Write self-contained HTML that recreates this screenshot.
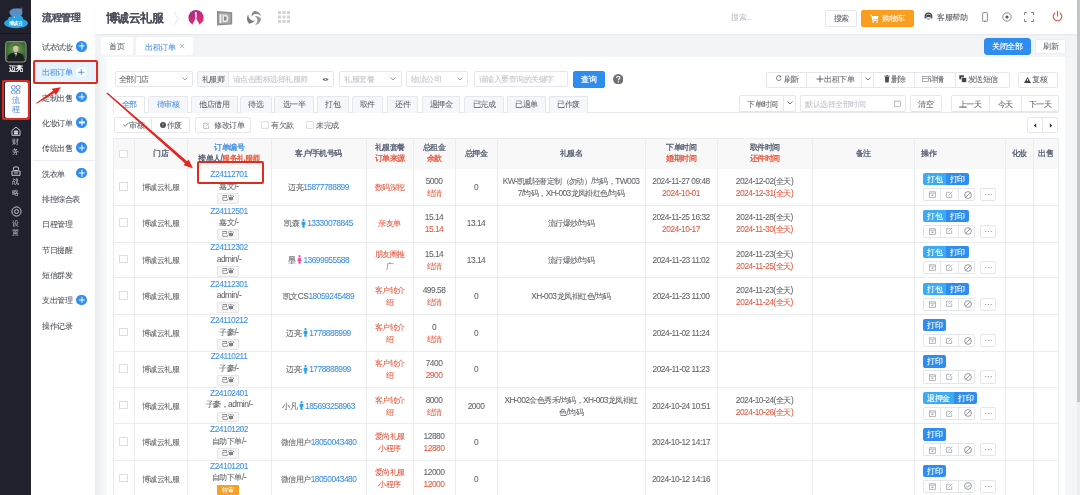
<!DOCTYPE html>
<html><head><meta charset="utf-8">
<style>
*{box-sizing:border-box;margin:0;padding:0}
html,body{width:1080px;height:495px;overflow:hidden}
body{position:relative;background:rgba(245,246,248,.99);font-family:"Liberation Sans",sans-serif;color:#606266;font-size:8.4px;line-height:1;font-weight:500;letter-spacing:-.5px}
.a{position:absolute}
.t{position:absolute;white-space:nowrap;line-height:1}
#nav{left:0;top:0;width:31px;height:495px;background:rgba(29,30,41,.99)}
#side{left:31px;top:0;width:64px;height:495px;background:rgba(255,255,255,.99)}
#hdr{left:95px;top:0;width:982px;height:34px;background:rgba(255,255,255,.99);box-shadow:0 1px 2px rgba(0,0,0,.06);z-index:1}
#tabs{left:95px;top:34px;width:982px;height:23px;background:rgba(243,244,246,.99)}
#card{left:107px;top:57px;width:958px;height:440px;background:rgba(255,255,255,.99)}
#sb{left:1077px;top:0;width:3px;height:402px;background:rgba(196,197,201,.99)}
.btn{position:absolute;border:1px solid #dcdfe6;border-radius:2px;background:rgba(255,255,255,.99);display:flex;align-items:center;justify-content:center;white-space:nowrap;color:#606266;font-size:8.4px}
.si{position:absolute;left:11.2px;font-size:8.4px;color:#4e5159;white-space:nowrap}
.plus{position:absolute;left:45.3px;width:10.7px;height:10.7px;border-radius:50%;background:rgba(45,140,240,.99)}
.plus:before,.plus:after{content:"";position:absolute;background:rgba(255,255,255,.99);left:50%;top:50%;transform:translate(-50%,-50%)}
.plus:before{width:6.4px;height:1.1px}.plus:after{width:1.1px;height:6.4px}
.nt{position:absolute;left:0;width:31px;text-align:center;color:#b9bcc4;font-size:7px;white-space:nowrap}
.red{color:#e6553a}.blue{color:#3a8ee6}
#root{position:absolute;left:0;top:0;width:1080px;height:495px;overflow:hidden;will-change:transform;-webkit-text-stroke:.05px}
</style></head><body><div id="root">
<!-- NAV -->
<div id="nav" class="a">
  <svg class="a" style="left:0;top:0" width="31" height="32" viewBox="0 0 31 32">
    <path d="M9.5 13 Q9 10.5 11.5 9.8 Q12.5 8 15.5 8.6 Q18.5 7.6 20.5 8.8 L21.8 8 L22.2 10 Q23 13 21.5 15.5 Q18 18 13 17 Q10 15.5 9.5 13Z" fill="#5b8ec4"/>
    <circle cx="21.6" cy="8.4" r=".9" fill="#c0392b"/>
    <circle cx="14" cy="17.6" r="1" fill="#e8f0f8"/>
    <ellipse cx="16" cy="23.3" rx="11.8" ry="4.9" fill="#2aa5e6"/>
    <circle cx="11.5" cy="20" r="3.6" fill="#2aa5e6"/>
    <circle cx="19" cy="19.4" r="4.2" fill="#2aa5e6"/>
    <text x="15.6" y="25" font-size="4.8" fill="#fff" text-anchor="middle" font-family="Liberation Sans" font-weight="bold" style="-webkit-text-stroke:0">博诚云</text>
  </svg>
  <div class="a" style="left:0;top:33px;width:31px;height:1px;background:rgba(22,22,30,.99)"></div>
  <svg class="a" style="left:5px;top:41px" width="21.5" height="21.5" viewBox="0 0 21.5 21.5">
    <defs><clipPath id="av"><rect x="0" y="0" width="21.5" height="21.5" rx="3"/></clipPath>
    <radialGradient id="gg" cx=".5" cy=".4" r=".7"><stop offset="0" stop-color="#7aa35a"/><stop offset=".6" stop-color="#3f6e34"/><stop offset="1" stop-color="#274722"/></radialGradient></defs>
    <g clip-path="url(#av)">
      <rect width="21.5" height="21.5" fill="url(#gg)"/>
      <ellipse cx="10.8" cy="7.6" rx="2.7" ry="3.4" fill="#d8c0a8"/>
      <path d="M8 5.6 Q10.8 2.8 13.6 5.6 L13.4 4.4 Q10.8 2.6 8.2 4.4Z" fill="#3a3226"/>
      <path d="M2 21.5 L3 14.5 Q5 12 9 11.5 L10.8 13 L12.6 11.5 Q16.5 12 18.5 14.5 L19.5 21.5Z" fill="#1c1f24"/>
      <path d="M9.3 11.6 L10.8 16 L12.3 11.6 L10.8 12.6Z" fill="#e8e8e8"/>
      <path d="M10.5 13 L11.1 13 L11.3 17 L10.8 18 L10.3 17Z" fill="#2a2a30"/>
    </g>
    <rect x=".5" y=".5" width="20.5" height="20.5" rx="3" fill="none" stroke="#8d8f86" stroke-width="1"/>
  </svg>
  <div class="nt" style="top:65px;color:#fff;font-size:7px;-webkit-text-stroke:.3px">迈亮</div>
  <div class="a" style="left:5px;top:82px;width:23px;height:36px;background:rgba(255,255,255,.99);border-radius:2px"></div>
  <svg class="a" style="left:11px;top:84.8px" width="9.5" height="9.5" viewBox="0 0 9.5 9.5">
    <g fill="none" stroke="#5b8bd8" stroke-width=".9"><circle cx="2.4" cy="2.4" r="1.95"/><circle cx="7.1" cy="2.4" r="1.95"/><circle cx="2.4" cy="7.1" r="1.95"/><circle cx="7.1" cy="7.1" r="1.95"/></g>
  </svg>
  <div class="nt" style="top:96.2px;color:#6393dd;font-size:8.4px">流</div>
  <div class="nt" style="top:104.6px;color:#6393dd;font-size:8.4px">程</div>
  <svg class="a" style="left:11px;top:126px" width="10" height="10" viewBox="0 0 10 10">
    <g fill="none" stroke="#c8cad0" stroke-width="1"><path d="M1 4.5 L5 1 L9 4.5 V9.3 H1 Z"/><rect x="3.5" y="5" width="3" height="3" fill="#c8cad0"/></g>
  </svg>
  <div class="nt" style="top:138px">财</div>
  <div class="nt" style="top:148px">务</div>
  <svg class="a" style="left:11px;top:166px" width="10" height="10" viewBox="0 0 10 10">
    <g fill="none" stroke="#c8cad0" stroke-width="1"><rect x="2.5" y="1" width="5" height="3.5" rx="1"/><path d="M1 5 H9 V9.3 H1 Z M3 7 H7"/></g>
  </svg>
  <div class="nt" style="top:178px">战</div>
  <div class="nt" style="top:188.5px">略</div>
  <svg class="a" style="left:10.5px;top:206px" width="11" height="11" viewBox="0 0 11 11">
    <g fill="none" stroke="#c8cad0" stroke-width="1"><circle cx="5.5" cy="5.5" r="4.6"/><circle cx="5.5" cy="5.5" r="2"/></g>
  </svg>
  <div class="nt" style="top:220px">设</div>
  <div class="nt" style="top:229px">置</div>
</div>
<!-- SIDE -->
<div id="side" class="a">
  <div class="t" style="left:11.2px;top:12.8px;font-size:9.5px;font-weight:bold;color:#50535e">流程管理</div>
  <div class="si" style="top:42.9px">试衣试妆</div>
  <div class="plus" style="top:41.0px"></div>
  <div class="a" style="left:2px;top:61px;width:63px;height:22px;background:rgba(230,243,253,.99)"></div>
  <div class="si" style="top:68.2px;color:#4a90e2">出租订单</div>
  <div class="a" style="left:45.3px;top:66.6px;width:10.7px;height:10.7px;border-radius:50%;background:rgba(255,255,255,.99)"></div>
  <svg class="a" style="left:47.4px;top:68.7px" width="6.5" height="6.5" viewBox="0 0 6.5 6.5"><path d="M3.25 0 V6.5 M0 3.25 H6.5" stroke="#4a90e2" stroke-width=".9"/></svg>
  <div class="si" style="top:93.6px">定制出售</div>
  <div class="plus" style="top:91.7px"></div>
  <div class="si" style="top:119.0px">化妆订单</div>
  <div class="plus" style="top:117.1px"></div>
  <div class="si" style="top:144.3px">传统出售</div>
  <div class="plus" style="top:142.4px"></div>
  <div class="a" style="left:2px;top:160px;width:62px;height:1px;background:rgba(235,238,245,.99)"></div>
  <div class="si" style="top:169.6px">洗衣单</div>
  <div class="plus" style="top:167.8px"></div>
  <div class="si" style="top:195.0px">排控综合表</div>
  <div class="si" style="top:220.4px">日程管理</div>
  <div class="si" style="top:245.7px">节日提醒</div>
  <div class="si" style="top:271.1px">短信群发</div>
  <div class="si" style="top:296.4px">支出管理</div>
  <div class="plus" style="top:294.5px"></div>
  <div class="si" style="top:321.8px">操作记录</div>
</div>
<!-- HEADER -->
<div id="hdr" class="a">
  <div class="t" style="left:10.5px;top:11.6px;font-size:11.7px;font-weight:bold;color:#4a4e5a">博诚云礼服</div>
  <svg class="a" style="left:78px;top:11px" width="6" height="15" viewBox="0 0 6 15"><path d="M1 1 L5 7.5 L1 14" fill="none" stroke="#e3e5ea" stroke-width="1"/></svg>
  <svg class="a" style="left:92.8px;top:10.1px" width="16" height="16" viewBox="0 0 16 16">
    <defs><linearGradient id="pg" x1="0" y1="0" x2=".6" y2="1"><stop offset="0" stop-color="#9c2a92"/><stop offset="1" stop-color="#ea2a68"/></linearGradient><clipPath id="pc"><circle cx="8" cy="7.7" r="7.6"/></clipPath></defs>
    <circle cx="8" cy="7.7" r="7.6" fill="url(#pg)"/>
    <g clip-path="url(#pc)" fill="#fff">
      <circle cx="7.8" cy="3" r="1.1"/>
      <path d="M7.2 4 L8.5 4 L8.8 6.5 L8.2 8 L9 10 L12.5 16 L3.5 16 L6.8 10 L7.4 8 L7 6.5Z"/>
    </g>
  </svg>
  <svg class="a" style="left:121.8px;top:10.5px" width="16" height="15" viewBox="0 0 16 15">
    <path d="M0 0 L15.2 1.2 V13.5 L0 14.6Z" fill="#8d8d8d"/>
    <path d="M1.6 1.8 L13.6 2.6 V12.3 L1.6 13Z" fill="#a9a9a9"/>
    <rect x="2.6" y="3.2" width="1.8" height="8.8" fill="#f2f2f2"/>
    <path d="M5.5 3.6 H8.5 Q11.3 3.6 11.3 7.5 Q11.3 11.3 8.5 11.3 H5.5Z" fill="#e6e6e6"/>
    <path d="M7 5.4 H8.3 Q9.6 5.4 9.6 7.5 Q9.6 9.5 8.3 9.5 H7Z" fill="#8a8a8a"/>
  </svg>
  <svg class="a" style="left:150.5px;top:10.1px" width="16" height="16" viewBox="0 0 16 16">
    <g fill="#8c8c8c">
      <path d="M8 1 C11.5 0.8 14.6 3 15 6.2 C13.5 4.2 11 3.6 8.6 4.3 C7.2 4.7 6.2 5.8 5.8 7 C5.3 4.6 6 2.4 8 1Z"/>
      <path d="M15 8.6 C14.8 12.4 12.2 14.8 9 15 C10.8 13.6 11.6 11.3 11.1 9 C10.8 7.6 9.8 6.6 8.6 6.2 C11 5.6 13.3 6.5 15 8.6Z" fill="#9a9a9a"/>
      <path d="M2.8 13.4 C0.6 10.8 0.4 7 2.2 4.4 C2.2 6.9 3.5 9 5.6 10.2 C6.9 10.9 8.3 10.9 9.4 10.3 C7.8 12.3 5.3 13.6 2.8 13.4Z" fill="#7a7a7a"/>
    </g>
  </svg>
  <svg class="a" style="left:183px;top:11px" width="12" height="12" viewBox="0 0 12 12">
    <g fill="#d0d2d6"><rect x="0" y="0" width="3" height="3"/><rect x="4.5" y="0" width="3" height="3"/><rect x="9" y="0" width="3" height="3"/><rect x="0" y="4.5" width="3" height="3"/><rect x="4.5" y="4.5" width="3" height="3"/><rect x="9" y="4.5" width="3" height="3"/><rect x="0" y="9" width="3" height="3"/><rect x="4.5" y="9" width="3" height="3"/><rect x="9" y="9" width="3" height="3"/></g>
  </svg>
  <div class="t" style="left:636px;top:13px;color:#c0c4cc;font-size:8.4px">搜索...</div>
  <div class="btn" style="left:730px;top:9.5px;width:32px;height:17px;border-color:#e4e7ed">搜索</div>
  <div class="btn" style="left:766px;top:9.5px;width:52.5px;height:17px;background:rgba(250,157,28,.99);border-color:#fa9d1c;color:#fff;justify-content:flex-start;padding-left:8px">
    <svg width="9" height="9" viewBox="0 0 9 9" style="margin-right:3px"><path d="M0 .8 H1.7 L2.1 2 H8.6 L7.6 5.4 H2.9 L3.1 6.2 H8 V7 H2.4 L1.2 1.6 H0Z" fill="#fff"/><circle cx="3.2" cy="8" r=".85" fill="#fff"/><circle cx="7" cy="8" r=".85" fill="#fff"/></svg>购物车</div>
  <svg class="a" style="left:829px;top:12px" width="9" height="10" viewBox="0 0 9 10"><path d="M4.5 .4 C1.8 .4 .6 2.2 .6 4.4 V6.4 H1.8 V4.6 C1.8 3 2.9 1.8 4.5 1.8 C6.1 1.8 7.2 3 7.2 4.6 V6.4 H8.4 V4.4 C8.4 2.2 7.2 .4 4.5 .4Z" fill="#3b3e45"/><path d="M2.2 3.2 Q4.5 1.6 6.8 3.2 Q7 6.8 4.5 8 Q2 6.8 2.2 3.2Z" fill="#3b3e45"/><path d="M2.9 5.2 Q4.5 4.4 6.1 5.2 Q5.9 7.3 4.5 7.6 Q3.1 7.3 2.9 5.2Z" fill="#e9eaec"/></svg>
  <div class="t" style="left:842px;top:13px;font-size:8.4px;color:#4f535c">客服帮助</div>
  <svg class="a" style="left:887px;top:12px" width="6" height="10" viewBox="0 0 6 10"><rect x=".6" y=".6" width="4.8" height="8.8" rx=".8" fill="none" stroke="#6b6e75" stroke-width=".8"/><rect x="2.3" y="8" width="1.4" height=".5" fill="#6b6e75"/></svg>
  <svg class="a" style="left:907px;top:12px" width="10" height="10" viewBox="0 0 10 10"><circle cx="5" cy="5" r="4.2" fill="none" stroke="#6b6e75" stroke-width=".8"/><circle cx="5" cy="5" r="1.6" fill="#55585f"/></svg>
  <svg class="a" style="left:929px;top:12px" width="10" height="10" viewBox="0 0 10 10"><g fill="none" stroke="#6b6e75" stroke-width=".8"><path d="M.5 3 V.5 H3 M7 .5 H9.5 V3 M9.5 7 V9.5 H7 M3 9.5 H.5 V7"/></g></svg>
  <svg class="a" style="left:957px;top:10px" width="11" height="12" viewBox="0 0 11 12"><g fill="none" stroke="#e25a3e" stroke-width="1.1" stroke-linecap="round"><path d="M3 3 A4.3 4.3 0 1 0 8 3"/><path d="M5.5 1 V6"/></g></svg>
</div>
<!-- TABS BAR -->
<div id="tabs" class="a">
  <div class="a" style="left:5.8px;top:3.3px;width:32px;height:17.5px;background:rgba(255,255,255,.99);border-radius:2px"></div>
  <div class="a" style="left:5.8px;top:3.3px;width:32px;height:17.5px;display:flex;align-items:center;justify-content:center;color:#666a73">首页</div>
  <div class="a" style="left:40.8px;top:3.3px;width:57px;height:17.5px;background:rgba(255,255,255,.99);border-radius:2px"></div>
  <div class="t" style="left:50px;top:8.6px;color:#4a90e2">出租订单</div>
  <svg class="a" style="left:84px;top:9px" width="6" height="6" viewBox="0 0 6 6"><path d="M.8 .8 L5.2 5.2 M5.2 .8 L.8 5.2" stroke="#a0a4ab" stroke-width=".8"/></svg>
  <div class="btn" style="left:889.3px;top:3.9px;width:46.4px;height:16.7px;background:rgba(45,140,240,.99);border-color:#2d8cf0;color:#fff;border-radius:3px;padding-bottom:1px;-webkit-text-stroke:.15px">关闭全部</div>
  <div class="btn" style="left:940.4px;top:4.9px;width:30.8px;height:15.6px;border-color:#ebedf0;padding-bottom:.6px">刷新</div>
</div>
<!-- CARD -->
<div class="a" style="left:95px;top:57px;width:12px;height:438px;background:linear-gradient(90deg,#e9ebee,#f5f6f8 60%,#f7f8fa)"></div>
<div id="card" class="a"></div>
<div class="a" style="left:1077px;top:402px;width:3px;height:93px;background:rgba(236,238,241,.99)"></div><div id="sb" class="a"></div>
<!-- Row A -->
<div class="btn" style="left:114.5px;top:71.4px;width:78px;height:16px;justify-content:flex-start;padding-left:3px;border-color:#e4e7ed">全部门店</div>
<svg class="a" style="left:182px;top:77px" width="6" height="4" viewBox="0 0 6 4"><path d="M.5 .5 L3 3 L5.5 .5" fill="none" stroke="#909399" stroke-width=".9"/></svg>
<div class="btn" style="left:197.3px;top:71.4px;width:137px;height:16px;justify-content:flex-start;border-color:#e4e7ed;overflow:hidden">
  <div style="width:30.5px;height:100%;background:rgba(245,247,250,.99);border-right:1px solid #e4e7ed;display:flex;align-items:center;justify-content:center;color:#606266">礼服师</div>
  <span style="margin-left:4px;color:#c0c4cc">请点击图标选择礼服师</span>
</div>
<svg class="a" style="left:322.3px;top:76.8px" width="7" height="5" viewBox="0 0 7 5"><path d="M.3 2.6 Q3.5 -.6 6.7 2.6 Q3.5 5.4 .3 2.6Z" fill="#5a5d63"/><circle cx="3.5" cy="2.5" r=".9" fill="#f0f0f0"/></svg>
<div class="btn" style="left:339px;top:71.4px;width:62.5px;height:16px;justify-content:flex-start;padding-left:4px;border-color:#e4e7ed;color:#c0c4cc">礼服套餐</div>
<svg class="a" style="left:390px;top:77px" width="6" height="4" viewBox="0 0 6 4"><path d="M.5 .5 L3 3 L5.5 .5" fill="none" stroke="#909399" stroke-width=".9"/></svg>
<div class="btn" style="left:406.4px;top:71.4px;width:62px;height:16px;justify-content:flex-start;padding-left:4px;border-color:#e4e7ed;color:#c0c4cc">物流公司</div>
<svg class="a" style="left:457px;top:77px" width="6" height="4" viewBox="0 0 6 4"><path d="M.5 .5 L3 3 L5.5 .5" fill="none" stroke="#909399" stroke-width=".9"/></svg>
<div class="btn" style="left:473.6px;top:71.4px;width:94.7px;height:16px;justify-content:flex-start;padding-left:4px;border-color:#e4e7ed;color:#c0c4cc">请输入要查询的关键字</div>
<div class="btn" style="left:572.5px;top:71px;width:32px;height:16.7px;background:rgba(45,140,240,.99);border-color:#2d8cf0;color:#fff;border-radius:2px;-webkit-text-stroke:.2px;padding-bottom:.6px">查询</div>
<svg class="a" style="left:612.6px;top:73.5px" width="10.5" height="10.5" viewBox="0 0 10.5 10.5"><circle cx="5.25" cy="5.25" r="5.2" fill="#6f7177"/><path d="M3.6 4 Q3.6 2.3 5.25 2.3 Q6.9 2.3 6.9 3.8 Q6.9 4.8 5.7 5.3 L5.4 6.4" fill="none" stroke="#fff" stroke-width="1.1"/><circle cx="5.4" cy="7.9" r=".7" fill="#fff"/></svg>
<!-- right group A -->
<div class="a" style="left:765.6px;top:71.5px;width:244.4px;height:16.1px;border:1px solid #e4e7ed;border-radius:2px;background:rgba(255,255,255,.99)"></div>
<div class="a" style="left:805.8px;top:71.5px;width:1px;height:16px;background:rgba(228,231,237,.99)"></div>
<div class="a" style="left:861.2px;top:71.5px;width:1px;height:16px;background:rgba(228,231,237,.99)"></div>
<div class="a" style="left:873.4px;top:71.5px;width:1px;height:16px;background:rgba(228,231,237,.99)"></div>
<div class="a" style="left:913.8px;top:71.5px;width:1px;height:16px;background:rgba(228,231,237,.99)"></div>
<div class="a" style="left:954.5px;top:71.5px;width:1px;height:16px;background:rgba(228,231,237,.99)"></div>
<svg class="a" style="left:776px;top:75.2px" width="6" height="6" viewBox="0 0 6 6"><path d="M5 2 A2.4 2.4 0 1 0 5.2 3.6" fill="none" stroke="#606266" stroke-width=".9"/><path d="M4 .6 L5.4 2.2 L3.6 2.6Z" fill="#606266"/></svg>
<div class="t" style="left:783.5px;top:74.5px">刷新</div>
<svg class="a" style="left:815.5px;top:74.5px" width="8" height="8" viewBox="0 0 8 8"><path d="M4 .5 V7.5 M.5 4 H7.5" stroke="#606266" stroke-width="1"/></svg>
<div class="t" style="left:824px;top:74.5px">出租下单</div>
<svg class="a" style="left:864.5px;top:77px" width="6" height="4" viewBox="0 0 6 4"><path d="M.5 .5 L3 3 L5.5 .5" fill="none" stroke="#606266" stroke-width=".9"/></svg>
<svg class="a" style="left:883.5px;top:75px" width="6" height="8" viewBox="0 0 6 8"><path d="M.3 1.2 H5.7 M2 .3 H4" stroke="#4a4d55" stroke-width=".9"/><path d="M.9 2 H5.1 L4.7 7.6 H1.3Z" fill="#4a4d55"/></svg>
<div class="t" style="left:890.5px;top:74.5px">删除</div>
<svg class="a" style="left:921.5px;top:75.5px" width="7" height="6" viewBox="0 0 7 6"><rect x=".5" y=".5" width="6" height="5" fill="none" stroke="#9a9da3" stroke-width=".8"/><path d="M.5 2.5 H6.5" stroke="#9a9da3" stroke-width=".8"/></svg>
<div class="t" style="left:928.5px;top:74.5px">详情</div>
<svg class="a" style="left:959px;top:74.8px" width="8" height="8" viewBox="0 0 8 8"><rect x=".3" y=".3" width="4.6" height="4" fill="#3f4249"/><rect x="2.6" y="2.7" width="5" height="4.6" fill="#3f4249" stroke="#fff" stroke-width=".6"/></svg>
<div class="t" style="left:967.5px;top:74.5px">发送短信</div>
<div class="btn" style="left:1017.7px;top:71.5px;width:40px;height:16.1px;border-color:#e4e7ed;justify-content:flex-start;padding-left:5.5px"><svg width="7" height="6" viewBox="0 0 7 6" style="margin-right:1px"><path d="M3.5 0 L7 6 H0Z" fill="#3f4249"/><path d="M3.5 2 V4" stroke="#fff" stroke-width=".8"/></svg>复核</div>
<!-- Row B tabs -->
<div class="a" style="left:113.4px;top:112.3px;width:945px;height:1px;background:rgba(228,231,237,.99)"></div>
<div class="a" style="left:113.4px;top:95.5px;width:32.0px;height:17.5px;background:rgba(255,255,255,.99);border:1px solid #e4e7ed;border-bottom:none;border-radius:2px 2px 0 0"></div>
<div class="a" style="left:113.4px;top:95.5px;width:32.0px;height:17px;display:flex;align-items:center;justify-content:center;color:#4a90e2;white-space:nowrap">全部</div>
<div class="a" style="left:148px;top:95.5px;width:39.7px;height:17px;background:rgba(245,247,250,.99);border:1px solid #e4e7ed;border-bottom:none;border-radius:2px 2px 0 0;display:flex;align-items:center;justify-content:center;color:#4a90e2;white-space:nowrap">待审核</div>
<div class="a" style="left:190.5px;top:95.5px;width:47.2px;height:17px;background:rgba(245,247,250,.99);border:1px solid #e4e7ed;border-bottom:none;border-radius:2px 2px 0 0;display:flex;align-items:center;justify-content:center;color:#606266;white-space:nowrap">他店借用</div>
<div class="a" style="left:240px;top:95.5px;width:31.7px;height:17px;background:rgba(245,247,250,.99);border:1px solid #e4e7ed;border-bottom:none;border-radius:2px 2px 0 0;display:flex;align-items:center;justify-content:center;color:#606266;white-space:nowrap">待选</div>
<div class="a" style="left:274.3px;top:95.5px;width:39.7px;height:17px;background:rgba(245,247,250,.99);border:1px solid #e4e7ed;border-bottom:none;border-radius:2px 2px 0 0;display:flex;align-items:center;justify-content:center;color:#606266;white-space:nowrap">选一半</div>
<div class="a" style="left:316.5px;top:95.5px;width:32.5px;height:17px;background:rgba(245,247,250,.99);border:1px solid #e4e7ed;border-bottom:none;border-radius:2px 2px 0 0;display:flex;align-items:center;justify-content:center;color:#606266;white-space:nowrap">打包</div>
<div class="a" style="left:351.7px;top:95.5px;width:31.6px;height:17px;background:rgba(245,247,250,.99);border:1px solid #e4e7ed;border-bottom:none;border-radius:2px 2px 0 0;display:flex;align-items:center;justify-content:center;color:#606266;white-space:nowrap">取件</div>
<div class="a" style="left:387px;top:95.5px;width:31.0px;height:17px;background:rgba(245,247,250,.99);border:1px solid #e4e7ed;border-bottom:none;border-radius:2px 2px 0 0;display:flex;align-items:center;justify-content:center;color:#606266;white-space:nowrap">还件</div>
<div class="a" style="left:421.7px;top:95.5px;width:38.8px;height:17px;background:rgba(245,247,250,.99);border:1px solid #e4e7ed;border-bottom:none;border-radius:2px 2px 0 0;display:flex;align-items:center;justify-content:center;color:#606266;white-space:nowrap">退押金</div>
<div class="a" style="left:464px;top:95.5px;width:39.6px;height:17px;background:rgba(245,247,250,.99);border:1px solid #e4e7ed;border-bottom:none;border-radius:2px 2px 0 0;display:flex;align-items:center;justify-content:center;color:#606266;white-space:nowrap">已完成</div>
<div class="a" style="left:507px;top:95.5px;width:38.5px;height:17px;background:rgba(245,247,250,.99);border:1px solid #e4e7ed;border-bottom:none;border-radius:2px 2px 0 0;display:flex;align-items:center;justify-content:center;color:#606266;white-space:nowrap">已退单</div>
<div class="a" style="left:549px;top:95.5px;width:39.3px;height:17px;background:rgba(245,247,250,.99);border:1px solid #e4e7ed;border-bottom:none;border-radius:2px 2px 0 0;display:flex;align-items:center;justify-content:center;color:#606266;white-space:nowrap">已作废</div>
<!-- Row B right -->
<div class="a" style="left:738.6px;top:95.3px;width:57.7px;height:17px;border:1px solid #e4e7ed;border-radius:2px;background:rgba(255,255,255,.99)"></div>
<div class="a" style="left:783.3px;top:95.3px;width:1px;height:16.7px;background:rgba(228,231,237,.99)"></div>
<div class="t" style="left:747px;top:99.9px">下单时间</div>
<svg class="a" style="left:787px;top:101.3px" width="6" height="4" viewBox="0 0 6 4"><path d="M.5 .5 L3 3 L5.5 .5" fill="none" stroke="#606266" stroke-width=".9"/></svg>
<div class="a" style="left:800.4px;top:95.3px;width:105.2px;height:17px;border:1px solid #e4e7ed;border-radius:2px;background:rgba(255,255,255,.99)"></div>
<div class="t" style="left:805px;top:99.9px;color:#c0c4cc">默认选择全部时间</div>
<svg class="a" style="left:894px;top:99.6px" width="7" height="7" viewBox="0 0 7 7"><g fill="none" stroke="#a8abb2" stroke-width=".7"><rect x=".4" y="1.2" width="6.2" height="5.4"/><path d="M2 .3 V1.6 M5 .3 V1.6"/></g></svg>
<div class="a" style="left:910.4px;top:95.3px;width:31.2px;height:17px;border:1px solid #e4e7ed;border-radius:2px;background:rgba(255,255,255,.99);display:flex;align-items:center;justify-content:center">清空</div>
<div class="a" style="left:950.7px;top:95.3px;width:108.2px;height:17px;border:1px solid #e4e7ed;border-radius:2px;background:rgba(255,255,255,.99)"></div>
<div class="a" style="left:989.4px;top:95.3px;width:1px;height:17px;background:rgba(228,231,237,.99)"></div>
<div class="a" style="left:1020.7px;top:95.3px;width:1px;height:17px;background:rgba(228,231,237,.99)"></div>
<div class="a" style="left:950.7px;top:95.3px;width:38.7px;height:17px;display:flex;align-items:center;justify-content:center">上一天</div>
<div class="a" style="left:989.4px;top:95.3px;width:31.3px;height:17px;display:flex;align-items:center;justify-content:center">今天</div>
<div class="a" style="left:1020.7px;top:95.3px;width:38.2px;height:17px;display:flex;align-items:center;justify-content:center">下一天</div>
<!-- Row C -->
<div class="a" style="left:113.6px;top:116.7px;width:76.6px;height:16.2px;border:1px solid #e4e7ed;border-radius:2px;background:rgba(255,255,255,.99)"></div>
<div class="a" style="left:150.7px;top:116.7px;width:1px;height:16.2px;background:rgba(228,231,237,.99)"></div>
<svg class="a" style="left:122.5px;top:122px" width="6" height="5" viewBox="0 0 6 5"><path d="M.4 2.6 L2.2 4.3 L5.6 .6" fill="none" stroke="#555" stroke-width=".8"/></svg>
<div class="t" style="left:129px;top:120.8px">审核</div>
<svg class="a" style="left:160px;top:121.5px" width="6" height="6" viewBox="0 0 6 6"><circle cx="3" cy="3" r="2.9" fill="#3f4249"/><path d="M3 1.3 V3.4" stroke="#fff" stroke-width=".8"/><circle cx="3" cy="4.5" r=".45" fill="#fff"/></svg>
<div class="t" style="left:166.9px;top:120.8px">作废</div>
<div class="btn" style="left:194.7px;top:116.7px;width:56.6px;height:16.2px;border-color:#e4e7ed"></div>
<svg class="a" style="left:202.5px;top:121.5px" width="7" height="7" viewBox="0 0 7 7"><g fill="none" stroke="#a0a3aa" stroke-width=".7"><path d="M4.5 1.3 H.6 V6.4 H5.7 V3.2"/><path d="M2.6 4.4 L6.4 .6"/></g></svg>
<div class="t" style="left:214.2px;top:120.8px">修改订单</div>
<div class="a" style="left:260.9px;top:120.7px;width:7.8px;height:8.2px;border:1px solid #dcdfe6;border-radius:1px;background:rgba(255,255,255,.99)"></div>
<div class="t" style="left:271.3px;top:120.8px">有欠款</div>
<div class="a" style="left:306.4px;top:120.7px;width:7.8px;height:8.2px;border:1px solid #dcdfe6;border-radius:1px;background:rgba(255,255,255,.99)"></div>
<div class="t" style="left:316.4px;top:120.8px">未完成</div>
<div class="a" style="left:1026.5px;top:116.7px;width:31.6px;height:16.1px;border:1px solid #e4e7ed;border-radius:2px;background:rgba(255,255,255,.99)"></div>
<div class="a" style="left:1042.4px;top:116.7px;width:1px;height:16.1px;background:rgba(228,231,237,.99)"></div>
<svg class="a" style="left:1032.5px;top:122.5px" width="4" height="5" viewBox="0 0 4 5"><path d="M3.2 .3 L.8 2.5 L3.2 4.7Z" fill="#333"/></svg>
<svg class="a" style="left:1048.5px;top:122.5px" width="4" height="5" viewBox="0 0 4 5"><path d="M.8 .3 L3.2 2.5 L.8 4.7Z" fill="#333"/></svg>
<div class="a" style="left:113px;top:138px;width:945.0px;height:30.8px;background:rgba(248,248,249,.99)"></div>
<div class="a" style="left:113px;top:138px;width:946px;height:1px;background:rgba(235,236,239,.99)"></div>
<div class="a" style="left:113px;top:205px;width:946px;height:1px;background:rgba(235,236,239,.99)"></div>
<div class="a" style="left:113px;top:242px;width:946px;height:1px;background:rgba(235,236,239,.99)"></div>
<div class="a" style="left:113px;top:277px;width:946px;height:1px;background:rgba(235,236,239,.99)"></div>
<div class="a" style="left:113px;top:314px;width:946px;height:1px;background:rgba(235,236,239,.99)"></div>
<div class="a" style="left:113px;top:351px;width:946px;height:1px;background:rgba(235,236,239,.99)"></div>
<div class="a" style="left:113px;top:387px;width:946px;height:1px;background:rgba(235,236,239,.99)"></div>
<div class="a" style="left:113px;top:423px;width:946px;height:1px;background:rgba(235,236,239,.99)"></div>
<div class="a" style="left:113px;top:460px;width:946px;height:1px;background:rgba(235,236,239,.99)"></div>
<div class="a" style="left:113px;top:138px;width:1px;height:357px;background:rgba(235,236,239,.99)"></div>
<div class="a" style="left:134px;top:138px;width:1px;height:357px;background:rgba(235,236,239,.99)"></div>
<div class="a" style="left:187px;top:138px;width:1px;height:357px;background:rgba(235,236,239,.99)"></div>
<div class="a" style="left:271px;top:138px;width:1px;height:357px;background:rgba(235,236,239,.99)"></div>
<div class="a" style="left:366px;top:138px;width:1px;height:357px;background:rgba(235,236,239,.99)"></div>
<div class="a" style="left:413px;top:138px;width:1px;height:357px;background:rgba(235,236,239,.99)"></div>
<div class="a" style="left:455px;top:138px;width:1px;height:357px;background:rgba(235,236,239,.99)"></div>
<div class="a" style="left:497px;top:138px;width:1px;height:357px;background:rgba(235,236,239,.99)"></div>
<div class="a" style="left:645px;top:138px;width:1px;height:357px;background:rgba(235,236,239,.99)"></div>
<div class="a" style="left:717px;top:138px;width:1px;height:357px;background:rgba(235,236,239,.99)"></div>
<div class="a" style="left:812px;top:138px;width:1px;height:357px;background:rgba(235,236,239,.99)"></div>
<div class="a" style="left:914px;top:138px;width:1px;height:357px;background:rgba(235,236,239,.99)"></div>
<div class="a" style="left:1005px;top:138px;width:1px;height:357px;background:rgba(235,236,239,.99)"></div>
<div class="a" style="left:1033px;top:138px;width:1px;height:357px;background:rgba(235,236,239,.99)"></div>
<div class="a" style="left:1058px;top:138px;width:1px;height:357px;background:rgba(235,236,239,.99)"></div>
<div class="a" style="left:119.4px;top:149.5px;width:8.5px;height:8.5px;border:1px solid #dcdee2;border-radius:1px;background:rgba(255,255,255,.99)"></div>
<div class="a" style="left:134.0px;top:148.00px;width:53.0px;height:10px;line-height:10px;text-align:center;white-space:nowrap;color:#515a6e;-webkit-text-stroke:.28px;">门店</div>
<div class="a" style="left:187.0px;top:141.90px;width:84.0px;height:10px;line-height:10px;text-align:center;white-space:nowrap;color:#3a8ee6;-webkit-text-stroke:.28px;">订单编号</div>
<div class="a" style="left:187.0px;top:153.10px;width:84.0px;height:10px;line-height:10px;text-align:center;white-space:nowrap;-webkit-text-stroke:.28px;"><span style="color:#515a6e">接单人/</span><span style="color:#e6553a">服务礼服师</span></div>
<div class="a" style="left:271.0px;top:148.00px;width:95.0px;height:10px;line-height:10px;text-align:center;white-space:nowrap;color:#515a6e;-webkit-text-stroke:.28px;">客户/手机号码</div>
<div class="a" style="left:366.0px;top:141.90px;width:47.0px;height:10px;line-height:10px;text-align:center;white-space:nowrap;color:#515a6e;-webkit-text-stroke:.28px;">礼服套餐</div>
<div class="a" style="left:366.0px;top:153.40px;width:47.0px;height:10px;line-height:10px;text-align:center;white-space:nowrap;color:#e6553a;-webkit-text-stroke:.28px;">订单来源</div>
<div class="a" style="left:413.0px;top:141.90px;width:42.0px;height:10px;line-height:10px;text-align:center;white-space:nowrap;color:#515a6e;-webkit-text-stroke:.28px;">总租金</div>
<div class="a" style="left:413.0px;top:153.40px;width:42.0px;height:10px;line-height:10px;text-align:center;white-space:nowrap;color:#e6553a;-webkit-text-stroke:.28px;">余款</div>
<div class="a" style="left:455.0px;top:148.00px;width:42.0px;height:10px;line-height:10px;text-align:center;white-space:nowrap;color:#515a6e;-webkit-text-stroke:.28px;">总押金</div>
<div class="a" style="left:497.0px;top:148.00px;width:148.0px;height:10px;line-height:10px;text-align:center;white-space:nowrap;color:#515a6e;-webkit-text-stroke:.28px;">礼服名</div>
<div class="a" style="left:645.0px;top:141.90px;width:72.0px;height:10px;line-height:10px;text-align:center;white-space:nowrap;color:#515a6e;-webkit-text-stroke:.28px;">下单时间</div>
<div class="a" style="left:645.0px;top:153.40px;width:72.0px;height:10px;line-height:10px;text-align:center;white-space:nowrap;color:#e6553a;-webkit-text-stroke:.28px;">婚期时间</div>
<div class="a" style="left:717.0px;top:141.90px;width:95.0px;height:10px;line-height:10px;text-align:center;white-space:nowrap;color:#515a6e;-webkit-text-stroke:.28px;">取件时间</div>
<div class="a" style="left:717.0px;top:153.40px;width:95.0px;height:10px;line-height:10px;text-align:center;white-space:nowrap;color:#e6553a;-webkit-text-stroke:.28px;">还件时间</div>
<div class="a" style="left:812.0px;top:148.00px;width:102.0px;height:10px;line-height:10px;text-align:center;white-space:nowrap;color:#515a6e;-webkit-text-stroke:.28px;">备注</div>
<div class="a" style="left:921px;top:148.0px;height:10px;line-height:10px;color:#515a6e;-webkit-text-stroke:.28px;">操作</div>
<div class="a" style="left:1005.0px;top:148.00px;width:28.0px;height:10px;line-height:10px;text-align:center;white-space:nowrap;color:#515a6e;-webkit-text-stroke:.28px;">化妆</div>
<div class="a" style="left:1033.0px;top:148.00px;width:25.0px;height:10px;line-height:10px;text-align:center;white-space:nowrap;color:#515a6e;-webkit-text-stroke:.28px;">出售</div>
<div class="a" style="left:119px;top:182.0px;width:8.5px;height:8.5px;border:1px solid #dcdee2;border-radius:.5px;background:rgba(255,255,255,.99)"></div>
<div class="a" style="left:134.0px;top:182.00px;width:53.0px;height:10px;line-height:10px;text-align:center;white-space:nowrap;">博诚云礼服</div>
<div class="a" style="left:187.0px;top:169.20px;width:84.0px;height:10px;line-height:10px;text-align:center;white-space:nowrap;color:#3a8ee6;">Z24112701</div>
<div class="a" style="left:187.0px;top:180.70px;width:84.0px;height:10px;line-height:10px;text-align:center;white-space:nowrap;">嘉文/-</div>
<div class="a" style="left:217px;top:192.9px;width:22px;height:10.9px;background:rgba(246,246,247,.99);border:1px solid #e6e6e8;border-radius:1px;color:#555;font-size:6.4px;line-height:8.9px;text-align:center;letter-spacing:0">已审</div>
<div class="a" style="left:271.0px;top:182.00px;width:95.0px;height:10px;line-height:10px;text-align:center;white-space:nowrap;">迈亮<span style="color:#3a8ee6">15877788899</span></div>
<div class="a" style="left:366.0px;top:182.00px;width:47.0px;height:10px;line-height:10px;text-align:center;white-space:nowrap;color:#e6553a;">数码深挖</div>
<div class="a" style="left:413.0px;top:175.80px;width:42.0px;height:10px;line-height:10px;text-align:center;white-space:nowrap;">5000</div>
<div class="a" style="left:413.0px;top:187.80px;width:42.0px;height:10px;line-height:10px;text-align:center;white-space:nowrap;color:#e6553a;">结清</div>
<div class="a" style="left:455.0px;top:182.00px;width:42.0px;height:10px;line-height:10px;text-align:center;white-space:nowrap;">0</div>
<div class="a" style="left:497.0px;top:175.80px;width:148.0px;height:10px;line-height:10px;text-align:center;white-space:nowrap;letter-spacing:-.58px;">KW-凯威轻奢定制（勿动）/均码，TW003</div>
<div class="a" style="left:497.0px;top:187.80px;width:148.0px;height:10px;line-height:10px;text-align:center;white-space:nowrap;letter-spacing:-.58px;">7/均码，XH-003龙凤褂红色/均码</div>
<div class="a" style="left:645.0px;top:175.80px;width:72.0px;height:10px;line-height:10px;text-align:center;white-space:nowrap;">2024-11-27 09:48</div>
<div class="a" style="left:645.0px;top:187.80px;width:72.0px;height:10px;line-height:10px;text-align:center;white-space:nowrap;color:#e6553a;">2024-10-01</div>
<div class="a" style="left:717.0px;top:175.80px;width:95.0px;height:10px;line-height:10px;text-align:center;white-space:nowrap;">2024-12-02(全天)</div>
<div class="a" style="left:717.0px;top:187.80px;width:95.0px;height:10px;line-height:10px;text-align:center;white-space:nowrap;color:#e6553a;">2024-12-31(全天)</div>
<div class="a" style="left:923.2px;top:173.1px;width:22.7px;height:12.4px;background:rgba(58,170,242,.99);border-radius:2px 0 0 2px;color:#fff;line-height:12.4px;text-align:center;-webkit-text-stroke:.12px">打包</div>
<div class="a" style="left:945.9px;top:173.1px;width:23.2px;height:12.4px;background:rgba(45,140,240,.99);border-radius:0 2px 2px 0;color:#fff;line-height:12.4px;text-align:center;-webkit-text-stroke:.12px">打印</div>
<div class="a" style="left:923.2px;top:188.1px;width:52px;height:13.2px;border:1px solid #e4e6ea;border-radius:2px;background:rgba(255,255,255,.99)"></div>
<div class="a" style="left:940px;top:188.1px;width:1px;height:13.2px;background:rgba(228,230,234,.99)"></div>
<div class="a" style="left:958px;top:188.1px;width:1px;height:13.2px;background:rgba(228,230,234,.99)"></div>
<div class="a" style="left:980.3px;top:188.1px;width:15.4px;height:13.2px;border:1px solid #e4e6ea;border-radius:2px;background:rgba(255,255,255,.99)"></div>
<svg class="a" style="left:928.5px;top:191.3px" width="7" height="7" viewBox="0 0 7 7"><g fill="none" stroke="#9a9da4" stroke-width=".7"><rect x=".4" y=".8" width="6.2" height="5.8"/><path d="M.4 2.2 H6.6 M2.3 4.3 H4.7 M3.5 3.3 V5.3"/></g></svg>
<svg class="a" style="left:946px;top:190.9px" width="7" height="7" viewBox="0 0 7 7"><g fill="none" stroke="#9a9da4" stroke-width=".7"><path d="M4.5 1.3 H.6 V6.4 H5.7 V3.2"/><path d="M2.6 4.4 L6.4 .6"/></g></svg>
<svg class="a" style="left:963.5px;top:190.7px" width="8" height="8" viewBox="0 0 8 8"><g fill="none" stroke="#7d8087" stroke-width=".8"><circle cx="4" cy="4" r="3.4"/><path d="M1.6 6.4 L6.4 1.6"/></g></svg>
<svg class="a" style="left:984.5px;top:194.1px" width="7" height="1.4" viewBox="0 0 7 1.4"><g fill="#8a8d94"><circle cx=".7" cy=".7" r=".6"/><circle cx="3.5" cy=".7" r=".6"/><circle cx="6.3" cy=".7" r=".6"/></g></svg>
<div class="a" style="left:119px;top:218.4px;width:8.5px;height:8.5px;border:1px solid #dcdee2;border-radius:.5px;background:rgba(255,255,255,.99)"></div>
<div class="a" style="left:134.0px;top:218.45px;width:53.0px;height:10px;line-height:10px;text-align:center;white-space:nowrap;">博诚云礼服</div>
<div class="a" style="left:187.0px;top:205.65px;width:84.0px;height:10px;line-height:10px;text-align:center;white-space:nowrap;color:#3a8ee6;">Z24112501</div>
<div class="a" style="left:187.0px;top:217.15px;width:84.0px;height:10px;line-height:10px;text-align:center;white-space:nowrap;">嘉文/-</div>
<div class="a" style="left:217px;top:229.3px;width:22px;height:10.9px;background:rgba(246,246,247,.99);border:1px solid #e6e6e8;border-radius:1px;color:#555;font-size:6.4px;line-height:8.9px;text-align:center;letter-spacing:0">已审</div>
<div class="a" style="left:271.0px;top:218.45px;width:95.0px;height:10px;line-height:10px;text-align:center;white-space:nowrap;">凯森<svg width="5" height="9" viewBox="0 0 5 9" style="vertical-align:-1.5px;margin:0 1.5px"><circle cx="2.5" cy="1.2" r="1.1" fill="#29a0e6"/><path d="M.6 2.8 H4.4 V5.8 H3.6 V8.8 H1.4 V5.8 H.6Z" fill="#29a0e6"/></svg><span style="color:#3a8ee6">13330078845</span></div>
<div class="a" style="left:366.0px;top:218.45px;width:47.0px;height:10px;line-height:10px;text-align:center;white-space:nowrap;color:#e6553a;">亲友单</div>
<div class="a" style="left:413.0px;top:212.25px;width:42.0px;height:10px;line-height:10px;text-align:center;white-space:nowrap;">15.14</div>
<div class="a" style="left:413.0px;top:224.25px;width:42.0px;height:10px;line-height:10px;text-align:center;white-space:nowrap;color:#e6553a;">15.14</div>
<div class="a" style="left:455.0px;top:218.45px;width:42.0px;height:10px;line-height:10px;text-align:center;white-space:nowrap;">13.14</div>
<div class="a" style="left:497.0px;top:218.45px;width:148.0px;height:10px;line-height:10px;text-align:center;white-space:nowrap;">流行爆炒/均码</div>
<div class="a" style="left:645.0px;top:212.25px;width:72.0px;height:10px;line-height:10px;text-align:center;white-space:nowrap;">2024-11-25 16:32</div>
<div class="a" style="left:645.0px;top:224.25px;width:72.0px;height:10px;line-height:10px;text-align:center;white-space:nowrap;color:#e6553a;">2024-10-17</div>
<div class="a" style="left:717.0px;top:212.25px;width:95.0px;height:10px;line-height:10px;text-align:center;white-space:nowrap;">2024-11-28(全天)</div>
<div class="a" style="left:717.0px;top:224.25px;width:95.0px;height:10px;line-height:10px;text-align:center;white-space:nowrap;color:#e6553a;">2024-11-30(全天)</div>
<div class="a" style="left:923.2px;top:209.6px;width:22.7px;height:12.4px;background:rgba(58,170,242,.99);border-radius:2px 0 0 2px;color:#fff;line-height:12.4px;text-align:center;-webkit-text-stroke:.12px">打包</div>
<div class="a" style="left:945.9px;top:209.6px;width:23.2px;height:12.4px;background:rgba(45,140,240,.99);border-radius:0 2px 2px 0;color:#fff;line-height:12.4px;text-align:center;-webkit-text-stroke:.12px">打印</div>
<div class="a" style="left:923.2px;top:224.6px;width:52px;height:13.2px;border:1px solid #e4e6ea;border-radius:2px;background:rgba(255,255,255,.99)"></div>
<div class="a" style="left:940px;top:224.6px;width:1px;height:13.2px;background:rgba(228,230,234,.99)"></div>
<div class="a" style="left:958px;top:224.6px;width:1px;height:13.2px;background:rgba(228,230,234,.99)"></div>
<div class="a" style="left:980.3px;top:224.6px;width:15.4px;height:13.2px;border:1px solid #e4e6ea;border-radius:2px;background:rgba(255,255,255,.99)"></div>
<svg class="a" style="left:928.5px;top:227.8px" width="7" height="7" viewBox="0 0 7 7"><g fill="none" stroke="#9a9da4" stroke-width=".7"><rect x=".4" y=".8" width="6.2" height="5.8"/><path d="M.4 2.2 H6.6 M2.3 4.3 H4.7 M3.5 3.3 V5.3"/></g></svg>
<svg class="a" style="left:946px;top:227.4px" width="7" height="7" viewBox="0 0 7 7"><g fill="none" stroke="#9a9da4" stroke-width=".7"><path d="M4.5 1.3 H.6 V6.4 H5.7 V3.2"/><path d="M2.6 4.4 L6.4 .6"/></g></svg>
<svg class="a" style="left:963.5px;top:227.2px" width="8" height="8" viewBox="0 0 8 8"><g fill="none" stroke="#7d8087" stroke-width=".8"><circle cx="4" cy="4" r="3.4"/><path d="M1.6 6.4 L6.4 1.6"/></g></svg>
<svg class="a" style="left:984.5px;top:230.6px" width="7" height="1.4" viewBox="0 0 7 1.4"><g fill="#8a8d94"><circle cx=".7" cy=".7" r=".6"/><circle cx="3.5" cy=".7" r=".6"/><circle cx="6.3" cy=".7" r=".6"/></g></svg>
<div class="a" style="left:119px;top:254.9px;width:8.5px;height:8.5px;border:1px solid #dcdee2;border-radius:.5px;background:rgba(255,255,255,.99)"></div>
<div class="a" style="left:134.0px;top:254.90px;width:53.0px;height:10px;line-height:10px;text-align:center;white-space:nowrap;">博诚云礼服</div>
<div class="a" style="left:187.0px;top:242.10px;width:84.0px;height:10px;line-height:10px;text-align:center;white-space:nowrap;color:#3a8ee6;">Z24112302</div>
<div class="a" style="left:187.0px;top:253.60px;width:84.0px;height:10px;line-height:10px;text-align:center;white-space:nowrap;">admin/-</div>
<div class="a" style="left:217px;top:265.8px;width:22px;height:10.9px;background:rgba(246,246,247,.99);border:1px solid #e6e6e8;border-radius:1px;color:#555;font-size:6.4px;line-height:8.9px;text-align:center;letter-spacing:0">已审</div>
<div class="a" style="left:271.0px;top:254.90px;width:95.0px;height:10px;line-height:10px;text-align:center;white-space:nowrap;">墨<svg width="5" height="9" viewBox="0 0 5 9" style="vertical-align:-1.5px;margin:0 1.5px"><circle cx="2.5" cy="1.2" r="1.1" fill="#ef4f9b"/><path d="M1.4 2.8 H3.6 L4.6 6 H3.6 V8.8 H1.4 V6 H.4Z" fill="#ef4f9b"/></svg><span style="color:#3a8ee6">13699955588</span></div>
<div class="a" style="left:366.0px;top:248.70px;width:47.0px;height:10px;line-height:10px;text-align:center;white-space:nowrap;color:#e6553a;">朋友圈推</div>
<div class="a" style="left:366.0px;top:260.70px;width:47.0px;height:10px;line-height:10px;text-align:center;white-space:nowrap;color:#e6553a;">广</div>
<div class="a" style="left:413.0px;top:248.70px;width:42.0px;height:10px;line-height:10px;text-align:center;white-space:nowrap;">15.14</div>
<div class="a" style="left:413.0px;top:260.70px;width:42.0px;height:10px;line-height:10px;text-align:center;white-space:nowrap;color:#e6553a;">结清</div>
<div class="a" style="left:455.0px;top:254.90px;width:42.0px;height:10px;line-height:10px;text-align:center;white-space:nowrap;">13.14</div>
<div class="a" style="left:497.0px;top:254.90px;width:148.0px;height:10px;line-height:10px;text-align:center;white-space:nowrap;">流行爆炒/均码</div>
<div class="a" style="left:645.0px;top:254.90px;width:72.0px;height:10px;line-height:10px;text-align:center;white-space:nowrap;">2024-11-23 11:02</div>
<div class="a" style="left:717.0px;top:248.70px;width:95.0px;height:10px;line-height:10px;text-align:center;white-space:nowrap;">2024-11-23(全天)</div>
<div class="a" style="left:717.0px;top:260.70px;width:95.0px;height:10px;line-height:10px;text-align:center;white-space:nowrap;color:#e6553a;">2024-11-25(全天)</div>
<div class="a" style="left:923.2px;top:246.0px;width:22.7px;height:12.4px;background:rgba(58,170,242,.99);border-radius:2px 0 0 2px;color:#fff;line-height:12.4px;text-align:center;-webkit-text-stroke:.12px">打包</div>
<div class="a" style="left:945.9px;top:246.0px;width:23.2px;height:12.4px;background:rgba(45,140,240,.99);border-radius:0 2px 2px 0;color:#fff;line-height:12.4px;text-align:center;-webkit-text-stroke:.12px">打印</div>
<div class="a" style="left:923.2px;top:261.0px;width:52px;height:13.2px;border:1px solid #e4e6ea;border-radius:2px;background:rgba(255,255,255,.99)"></div>
<div class="a" style="left:940px;top:261.0px;width:1px;height:13.2px;background:rgba(228,230,234,.99)"></div>
<div class="a" style="left:958px;top:261.0px;width:1px;height:13.2px;background:rgba(228,230,234,.99)"></div>
<div class="a" style="left:980.3px;top:261.0px;width:15.4px;height:13.2px;border:1px solid #e4e6ea;border-radius:2px;background:rgba(255,255,255,.99)"></div>
<svg class="a" style="left:928.5px;top:264.2px" width="7" height="7" viewBox="0 0 7 7"><g fill="none" stroke="#9a9da4" stroke-width=".7"><rect x=".4" y=".8" width="6.2" height="5.8"/><path d="M.4 2.2 H6.6 M2.3 4.3 H4.7 M3.5 3.3 V5.3"/></g></svg>
<svg class="a" style="left:946px;top:263.8px" width="7" height="7" viewBox="0 0 7 7"><g fill="none" stroke="#9a9da4" stroke-width=".7"><path d="M4.5 1.3 H.6 V6.4 H5.7 V3.2"/><path d="M2.6 4.4 L6.4 .6"/></g></svg>
<svg class="a" style="left:963.5px;top:263.6px" width="8" height="8" viewBox="0 0 8 8"><g fill="none" stroke="#7d8087" stroke-width=".8"><circle cx="4" cy="4" r="3.4"/><path d="M1.6 6.4 L6.4 1.6"/></g></svg>
<svg class="a" style="left:984.5px;top:267.0px" width="7" height="1.4" viewBox="0 0 7 1.4"><g fill="#8a8d94"><circle cx=".7" cy=".7" r=".6"/><circle cx="3.5" cy=".7" r=".6"/><circle cx="6.3" cy=".7" r=".6"/></g></svg>
<div class="a" style="left:119px;top:291.4px;width:8.5px;height:8.5px;border:1px solid #dcdee2;border-radius:.5px;background:rgba(255,255,255,.99)"></div>
<div class="a" style="left:134.0px;top:291.35px;width:53.0px;height:10px;line-height:10px;text-align:center;white-space:nowrap;">博诚云礼服</div>
<div class="a" style="left:187.0px;top:278.55px;width:84.0px;height:10px;line-height:10px;text-align:center;white-space:nowrap;color:#3a8ee6;">Z24112301</div>
<div class="a" style="left:187.0px;top:290.05px;width:84.0px;height:10px;line-height:10px;text-align:center;white-space:nowrap;">admin/-</div>
<div class="a" style="left:217px;top:302.3px;width:22px;height:10.9px;background:rgba(246,246,247,.99);border:1px solid #e6e6e8;border-radius:1px;color:#555;font-size:6.4px;line-height:8.9px;text-align:center;letter-spacing:0">已审</div>
<div class="a" style="left:271.0px;top:291.35px;width:95.0px;height:10px;line-height:10px;text-align:center;white-space:nowrap;">凯文CS<span style="color:#3a8ee6">18059245489</span></div>
<div class="a" style="left:366.0px;top:285.15px;width:47.0px;height:10px;line-height:10px;text-align:center;white-space:nowrap;color:#e6553a;">客户转介</div>
<div class="a" style="left:366.0px;top:297.15px;width:47.0px;height:10px;line-height:10px;text-align:center;white-space:nowrap;color:#e6553a;">绍</div>
<div class="a" style="left:413.0px;top:285.15px;width:42.0px;height:10px;line-height:10px;text-align:center;white-space:nowrap;">499.58</div>
<div class="a" style="left:413.0px;top:297.15px;width:42.0px;height:10px;line-height:10px;text-align:center;white-space:nowrap;color:#e6553a;">结清</div>
<div class="a" style="left:455.0px;top:291.35px;width:42.0px;height:10px;line-height:10px;text-align:center;white-space:nowrap;">0</div>
<div class="a" style="left:497.0px;top:291.35px;width:148.0px;height:10px;line-height:10px;text-align:center;white-space:nowrap;">XH-003龙凤褂红色/均码</div>
<div class="a" style="left:645.0px;top:291.35px;width:72.0px;height:10px;line-height:10px;text-align:center;white-space:nowrap;">2024-11-23 11:00</div>
<div class="a" style="left:717.0px;top:285.15px;width:95.0px;height:10px;line-height:10px;text-align:center;white-space:nowrap;">2024-11-23(全天)</div>
<div class="a" style="left:717.0px;top:297.15px;width:95.0px;height:10px;line-height:10px;text-align:center;white-space:nowrap;color:#e6553a;">2024-11-24(全天)</div>
<div class="a" style="left:923.2px;top:282.5px;width:22.7px;height:12.4px;background:rgba(58,170,242,.99);border-radius:2px 0 0 2px;color:#fff;line-height:12.4px;text-align:center;-webkit-text-stroke:.12px">打包</div>
<div class="a" style="left:945.9px;top:282.5px;width:23.2px;height:12.4px;background:rgba(45,140,240,.99);border-radius:0 2px 2px 0;color:#fff;line-height:12.4px;text-align:center;-webkit-text-stroke:.12px">打印</div>
<div class="a" style="left:923.2px;top:297.5px;width:52px;height:13.2px;border:1px solid #e4e6ea;border-radius:2px;background:rgba(255,255,255,.99)"></div>
<div class="a" style="left:940px;top:297.5px;width:1px;height:13.2px;background:rgba(228,230,234,.99)"></div>
<div class="a" style="left:958px;top:297.5px;width:1px;height:13.2px;background:rgba(228,230,234,.99)"></div>
<div class="a" style="left:980.3px;top:297.5px;width:15.4px;height:13.2px;border:1px solid #e4e6ea;border-radius:2px;background:rgba(255,255,255,.99)"></div>
<svg class="a" style="left:928.5px;top:300.7px" width="7" height="7" viewBox="0 0 7 7"><g fill="none" stroke="#9a9da4" stroke-width=".7"><rect x=".4" y=".8" width="6.2" height="5.8"/><path d="M.4 2.2 H6.6 M2.3 4.3 H4.7 M3.5 3.3 V5.3"/></g></svg>
<svg class="a" style="left:946px;top:300.3px" width="7" height="7" viewBox="0 0 7 7"><g fill="none" stroke="#9a9da4" stroke-width=".7"><path d="M4.5 1.3 H.6 V6.4 H5.7 V3.2"/><path d="M2.6 4.4 L6.4 .6"/></g></svg>
<svg class="a" style="left:963.5px;top:300.1px" width="8" height="8" viewBox="0 0 8 8"><g fill="none" stroke="#7d8087" stroke-width=".8"><circle cx="4" cy="4" r="3.4"/><path d="M1.6 6.4 L6.4 1.6"/></g></svg>
<svg class="a" style="left:984.5px;top:303.5px" width="7" height="1.4" viewBox="0 0 7 1.4"><g fill="#8a8d94"><circle cx=".7" cy=".7" r=".6"/><circle cx="3.5" cy=".7" r=".6"/><circle cx="6.3" cy=".7" r=".6"/></g></svg>
<div class="a" style="left:119px;top:327.8px;width:8.5px;height:8.5px;border:1px solid #dcdee2;border-radius:.5px;background:rgba(255,255,255,.99)"></div>
<div class="a" style="left:134.0px;top:327.80px;width:53.0px;height:10px;line-height:10px;text-align:center;white-space:nowrap;">博诚云礼服</div>
<div class="a" style="left:187.0px;top:315.00px;width:84.0px;height:10px;line-height:10px;text-align:center;white-space:nowrap;color:#3a8ee6;">Z24110212</div>
<div class="a" style="left:187.0px;top:326.50px;width:84.0px;height:10px;line-height:10px;text-align:center;white-space:nowrap;">子豪/-</div>
<div class="a" style="left:217px;top:338.7px;width:22px;height:10.9px;background:rgba(246,246,247,.99);border:1px solid #e6e6e8;border-radius:1px;color:#555;font-size:6.4px;line-height:8.9px;text-align:center;letter-spacing:0">已审</div>
<div class="a" style="left:271.0px;top:327.80px;width:95.0px;height:10px;line-height:10px;text-align:center;white-space:nowrap;">迈亮<svg width="5" height="9" viewBox="0 0 5 9" style="vertical-align:-1.5px;margin:0 1.5px"><circle cx="2.5" cy="1.2" r="1.1" fill="#29a0e6"/><path d="M.6 2.8 H4.4 V5.8 H3.6 V8.8 H1.4 V5.8 H.6Z" fill="#29a0e6"/></svg><span style="color:#3a8ee6">1778888999</span></div>
<div class="a" style="left:366.0px;top:321.60px;width:47.0px;height:10px;line-height:10px;text-align:center;white-space:nowrap;color:#e6553a;">客户转介</div>
<div class="a" style="left:366.0px;top:333.60px;width:47.0px;height:10px;line-height:10px;text-align:center;white-space:nowrap;color:#e6553a;">绍</div>
<div class="a" style="left:413.0px;top:321.60px;width:42.0px;height:10px;line-height:10px;text-align:center;white-space:nowrap;">0</div>
<div class="a" style="left:413.0px;top:333.60px;width:42.0px;height:10px;line-height:10px;text-align:center;white-space:nowrap;color:#e6553a;">结清</div>
<div class="a" style="left:455.0px;top:327.80px;width:42.0px;height:10px;line-height:10px;text-align:center;white-space:nowrap;">0</div>
<div class="a" style="left:645.0px;top:327.80px;width:72.0px;height:10px;line-height:10px;text-align:center;white-space:nowrap;">2024-11-02 11:24</div>
<div class="a" style="left:923.2px;top:318.9px;width:22.8px;height:12.4px;background:rgba(45,140,240,.99);border-radius:2px;color:#fff;line-height:12.4px;text-align:center;-webkit-text-stroke:.12px">打印</div>
<div class="a" style="left:923.2px;top:333.9px;width:52px;height:13.2px;border:1px solid #e4e6ea;border-radius:2px;background:rgba(255,255,255,.99)"></div>
<div class="a" style="left:940px;top:333.9px;width:1px;height:13.2px;background:rgba(228,230,234,.99)"></div>
<div class="a" style="left:958px;top:333.9px;width:1px;height:13.2px;background:rgba(228,230,234,.99)"></div>
<div class="a" style="left:980.3px;top:333.9px;width:15.4px;height:13.2px;border:1px solid #e4e6ea;border-radius:2px;background:rgba(255,255,255,.99)"></div>
<svg class="a" style="left:928.5px;top:337.1px" width="7" height="7" viewBox="0 0 7 7"><g fill="none" stroke="#9a9da4" stroke-width=".7"><rect x=".4" y=".8" width="6.2" height="5.8"/><path d="M.4 2.2 H6.6 M2.3 4.3 H4.7 M3.5 3.3 V5.3"/></g></svg>
<svg class="a" style="left:946px;top:336.7px" width="7" height="7" viewBox="0 0 7 7"><g fill="none" stroke="#9a9da4" stroke-width=".7"><path d="M4.5 1.3 H.6 V6.4 H5.7 V3.2"/><path d="M2.6 4.4 L6.4 .6"/></g></svg>
<svg class="a" style="left:963.5px;top:336.5px" width="8" height="8" viewBox="0 0 8 8"><g fill="none" stroke="#7d8087" stroke-width=".8"><circle cx="4" cy="4" r="3.4"/><path d="M1.6 6.4 L6.4 1.6"/></g></svg>
<svg class="a" style="left:984.5px;top:339.9px" width="7" height="1.4" viewBox="0 0 7 1.4"><g fill="#8a8d94"><circle cx=".7" cy=".7" r=".6"/><circle cx="3.5" cy=".7" r=".6"/><circle cx="6.3" cy=".7" r=".6"/></g></svg>
<div class="a" style="left:119px;top:364.2px;width:8.5px;height:8.5px;border:1px solid #dcdee2;border-radius:.5px;background:rgba(255,255,255,.99)"></div>
<div class="a" style="left:134.0px;top:364.25px;width:53.0px;height:10px;line-height:10px;text-align:center;white-space:nowrap;">博诚云礼服</div>
<div class="a" style="left:187.0px;top:351.45px;width:84.0px;height:10px;line-height:10px;text-align:center;white-space:nowrap;color:#3a8ee6;">Z24110211</div>
<div class="a" style="left:187.0px;top:362.95px;width:84.0px;height:10px;line-height:10px;text-align:center;white-space:nowrap;">子豪/-</div>
<div class="a" style="left:217px;top:375.2px;width:22px;height:10.9px;background:rgba(246,246,247,.99);border:1px solid #e6e6e8;border-radius:1px;color:#555;font-size:6.4px;line-height:8.9px;text-align:center;letter-spacing:0">已审</div>
<div class="a" style="left:271.0px;top:364.25px;width:95.0px;height:10px;line-height:10px;text-align:center;white-space:nowrap;">迈亮<svg width="5" height="9" viewBox="0 0 5 9" style="vertical-align:-1.5px;margin:0 1.5px"><circle cx="2.5" cy="1.2" r="1.1" fill="#29a0e6"/><path d="M.6 2.8 H4.4 V5.8 H3.6 V8.8 H1.4 V5.8 H.6Z" fill="#29a0e6"/></svg><span style="color:#3a8ee6">1778888999</span></div>
<div class="a" style="left:366.0px;top:358.05px;width:47.0px;height:10px;line-height:10px;text-align:center;white-space:nowrap;color:#e6553a;">客户转介</div>
<div class="a" style="left:366.0px;top:370.05px;width:47.0px;height:10px;line-height:10px;text-align:center;white-space:nowrap;color:#e6553a;">绍</div>
<div class="a" style="left:413.0px;top:358.05px;width:42.0px;height:10px;line-height:10px;text-align:center;white-space:nowrap;">7400</div>
<div class="a" style="left:413.0px;top:370.05px;width:42.0px;height:10px;line-height:10px;text-align:center;white-space:nowrap;color:#e6553a;">2900</div>
<div class="a" style="left:455.0px;top:364.25px;width:42.0px;height:10px;line-height:10px;text-align:center;white-space:nowrap;">0</div>
<div class="a" style="left:645.0px;top:364.25px;width:72.0px;height:10px;line-height:10px;text-align:center;white-space:nowrap;">2024-11-02 11:23</div>
<div class="a" style="left:923.2px;top:355.4px;width:22.8px;height:12.4px;background:rgba(45,140,240,.99);border-radius:2px;color:#fff;line-height:12.4px;text-align:center;-webkit-text-stroke:.12px">打印</div>
<div class="a" style="left:923.2px;top:370.4px;width:52px;height:13.2px;border:1px solid #e4e6ea;border-radius:2px;background:rgba(255,255,255,.99)"></div>
<div class="a" style="left:940px;top:370.4px;width:1px;height:13.2px;background:rgba(228,230,234,.99)"></div>
<div class="a" style="left:958px;top:370.4px;width:1px;height:13.2px;background:rgba(228,230,234,.99)"></div>
<div class="a" style="left:980.3px;top:370.4px;width:15.4px;height:13.2px;border:1px solid #e4e6ea;border-radius:2px;background:rgba(255,255,255,.99)"></div>
<svg class="a" style="left:928.5px;top:373.6px" width="7" height="7" viewBox="0 0 7 7"><g fill="none" stroke="#9a9da4" stroke-width=".7"><rect x=".4" y=".8" width="6.2" height="5.8"/><path d="M.4 2.2 H6.6 M2.3 4.3 H4.7 M3.5 3.3 V5.3"/></g></svg>
<svg class="a" style="left:946px;top:373.2px" width="7" height="7" viewBox="0 0 7 7"><g fill="none" stroke="#9a9da4" stroke-width=".7"><path d="M4.5 1.3 H.6 V6.4 H5.7 V3.2"/><path d="M2.6 4.4 L6.4 .6"/></g></svg>
<svg class="a" style="left:963.5px;top:373.0px" width="8" height="8" viewBox="0 0 8 8"><g fill="none" stroke="#7d8087" stroke-width=".8"><circle cx="4" cy="4" r="3.4"/><path d="M1.6 6.4 L6.4 1.6"/></g></svg>
<svg class="a" style="left:984.5px;top:376.4px" width="7" height="1.4" viewBox="0 0 7 1.4"><g fill="#8a8d94"><circle cx=".7" cy=".7" r=".6"/><circle cx="3.5" cy=".7" r=".6"/><circle cx="6.3" cy=".7" r=".6"/></g></svg>
<div class="a" style="left:119px;top:400.7px;width:8.5px;height:8.5px;border:1px solid #dcdee2;border-radius:.5px;background:rgba(255,255,255,.99)"></div>
<div class="a" style="left:134.0px;top:400.70px;width:53.0px;height:10px;line-height:10px;text-align:center;white-space:nowrap;">博诚云礼服</div>
<div class="a" style="left:187.0px;top:387.90px;width:84.0px;height:10px;line-height:10px;text-align:center;white-space:nowrap;color:#3a8ee6;">Z24102401</div>
<div class="a" style="left:187.0px;top:399.40px;width:84.0px;height:10px;line-height:10px;text-align:center;white-space:nowrap;">子豪，admin/-</div>
<div class="a" style="left:217px;top:411.6px;width:22px;height:10.9px;background:rgba(246,246,247,.99);border:1px solid #e6e6e8;border-radius:1px;color:#555;font-size:6.4px;line-height:8.9px;text-align:center;letter-spacing:0">已审</div>
<div class="a" style="left:271.0px;top:400.70px;width:95.0px;height:10px;line-height:10px;text-align:center;white-space:nowrap;">小凡<svg width="5" height="9" viewBox="0 0 5 9" style="vertical-align:-1.5px;margin:0 1.5px"><circle cx="2.5" cy="1.2" r="1.1" fill="#29a0e6"/><path d="M.6 2.8 H4.4 V5.8 H3.6 V8.8 H1.4 V5.8 H.6Z" fill="#29a0e6"/></svg><span style="color:#3a8ee6">185693258963</span></div>
<div class="a" style="left:366.0px;top:394.50px;width:47.0px;height:10px;line-height:10px;text-align:center;white-space:nowrap;color:#e6553a;">客户转介</div>
<div class="a" style="left:366.0px;top:406.50px;width:47.0px;height:10px;line-height:10px;text-align:center;white-space:nowrap;color:#e6553a;">绍</div>
<div class="a" style="left:413.0px;top:394.50px;width:42.0px;height:10px;line-height:10px;text-align:center;white-space:nowrap;">8000</div>
<div class="a" style="left:413.0px;top:406.50px;width:42.0px;height:10px;line-height:10px;text-align:center;white-space:nowrap;color:#e6553a;">结清</div>
<div class="a" style="left:455.0px;top:400.70px;width:42.0px;height:10px;line-height:10px;text-align:center;white-space:nowrap;">2000</div>
<div class="a" style="left:497.0px;top:394.50px;width:148.0px;height:10px;line-height:10px;text-align:center;white-space:nowrap;letter-spacing:-.58px;">XH-002金色秀禾/均码，XH-003龙凤褂红</div>
<div class="a" style="left:497.0px;top:406.50px;width:148.0px;height:10px;line-height:10px;text-align:center;white-space:nowrap;letter-spacing:-.58px;">色/均码</div>
<div class="a" style="left:645.0px;top:400.70px;width:72.0px;height:10px;line-height:10px;text-align:center;white-space:nowrap;">2024-10-24 10:51</div>
<div class="a" style="left:717.0px;top:394.50px;width:95.0px;height:10px;line-height:10px;text-align:center;white-space:nowrap;">2024-10-24(全天)</div>
<div class="a" style="left:717.0px;top:406.50px;width:95.0px;height:10px;line-height:10px;text-align:center;white-space:nowrap;color:#e6553a;">2024-10-26(全天)</div>
<div class="a" style="left:923.2px;top:391.8px;width:31px;height:12.4px;background:rgba(58,170,242,.99);border-radius:2px 0 0 2px;color:#fff;line-height:12.4px;text-align:center;-webkit-text-stroke:.12px">退押金</div>
<div class="a" style="left:954.2px;top:391.8px;width:23.2px;height:12.4px;background:rgba(45,140,240,.99);border-radius:0 2px 2px 0;color:#fff;line-height:12.4px;text-align:center;-webkit-text-stroke:.12px">打印</div>
<div class="a" style="left:923.2px;top:406.8px;width:52px;height:13.2px;border:1px solid #e4e6ea;border-radius:2px;background:rgba(255,255,255,.99)"></div>
<div class="a" style="left:940px;top:406.8px;width:1px;height:13.2px;background:rgba(228,230,234,.99)"></div>
<div class="a" style="left:958px;top:406.8px;width:1px;height:13.2px;background:rgba(228,230,234,.99)"></div>
<div class="a" style="left:980.3px;top:406.8px;width:15.4px;height:13.2px;border:1px solid #e4e6ea;border-radius:2px;background:rgba(255,255,255,.99)"></div>
<svg class="a" style="left:928.5px;top:410.0px" width="7" height="7" viewBox="0 0 7 7"><g fill="none" stroke="#9a9da4" stroke-width=".7"><rect x=".4" y=".8" width="6.2" height="5.8"/><path d="M.4 2.2 H6.6 M2.3 4.3 H4.7 M3.5 3.3 V5.3"/></g></svg>
<svg class="a" style="left:946px;top:409.6px" width="7" height="7" viewBox="0 0 7 7"><g fill="none" stroke="#9a9da4" stroke-width=".7"><path d="M4.5 1.3 H.6 V6.4 H5.7 V3.2"/><path d="M2.6 4.4 L6.4 .6"/></g></svg>
<svg class="a" style="left:963.5px;top:409.4px" width="8" height="8" viewBox="0 0 8 8"><g fill="none" stroke="#7d8087" stroke-width=".8"><circle cx="4" cy="4" r="3.4"/><path d="M1.6 6.4 L6.4 1.6"/></g></svg>
<svg class="a" style="left:984.5px;top:412.8px" width="7" height="1.4" viewBox="0 0 7 1.4"><g fill="#8a8d94"><circle cx=".7" cy=".7" r=".6"/><circle cx="3.5" cy=".7" r=".6"/><circle cx="6.3" cy=".7" r=".6"/></g></svg>
<div class="a" style="left:119px;top:437.2px;width:8.5px;height:8.5px;border:1px solid #dcdee2;border-radius:.5px;background:rgba(255,255,255,.99)"></div>
<div class="a" style="left:134.0px;top:437.15px;width:53.0px;height:10px;line-height:10px;text-align:center;white-space:nowrap;">博诚云礼服</div>
<div class="a" style="left:187.0px;top:424.35px;width:84.0px;height:10px;line-height:10px;text-align:center;white-space:nowrap;color:#3a8ee6;">Z24101202</div>
<div class="a" style="left:187.0px;top:435.85px;width:84.0px;height:10px;line-height:10px;text-align:center;white-space:nowrap;">自助下单/-</div>
<div class="a" style="left:217px;top:448.1px;width:22px;height:10.9px;background:rgba(246,246,247,.99);border:1px solid #e6e6e8;border-radius:1px;color:#555;font-size:6.4px;line-height:8.9px;text-align:center;letter-spacing:0">已审</div>
<div class="a" style="left:271.0px;top:437.15px;width:95.0px;height:10px;line-height:10px;text-align:center;white-space:nowrap;">微信用户<span style="color:#3a8ee6">18050043480</span></div>
<div class="a" style="left:366.0px;top:430.95px;width:47.0px;height:10px;line-height:10px;text-align:center;white-space:nowrap;color:#e6553a;">爱尚礼服</div>
<div class="a" style="left:366.0px;top:442.95px;width:47.0px;height:10px;line-height:10px;text-align:center;white-space:nowrap;color:#e6553a;">小程序</div>
<div class="a" style="left:413.0px;top:430.95px;width:42.0px;height:10px;line-height:10px;text-align:center;white-space:nowrap;">12880</div>
<div class="a" style="left:413.0px;top:442.95px;width:42.0px;height:10px;line-height:10px;text-align:center;white-space:nowrap;color:#e6553a;">12880</div>
<div class="a" style="left:455.0px;top:437.15px;width:42.0px;height:10px;line-height:10px;text-align:center;white-space:nowrap;">0</div>
<div class="a" style="left:645.0px;top:437.15px;width:72.0px;height:10px;line-height:10px;text-align:center;white-space:nowrap;">2024-10-12 14:17</div>
<div class="a" style="left:923.2px;top:428.3px;width:22.8px;height:12.4px;background:rgba(45,140,240,.99);border-radius:2px;color:#fff;line-height:12.4px;text-align:center;-webkit-text-stroke:.12px">打印</div>
<div class="a" style="left:923.2px;top:443.3px;width:52px;height:13.2px;border:1px solid #e4e6ea;border-radius:2px;background:rgba(255,255,255,.99)"></div>
<div class="a" style="left:940px;top:443.3px;width:1px;height:13.2px;background:rgba(228,230,234,.99)"></div>
<div class="a" style="left:958px;top:443.3px;width:1px;height:13.2px;background:rgba(228,230,234,.99)"></div>
<div class="a" style="left:980.3px;top:443.3px;width:15.4px;height:13.2px;border:1px solid #e4e6ea;border-radius:2px;background:rgba(255,255,255,.99)"></div>
<svg class="a" style="left:928.5px;top:446.5px" width="7" height="7" viewBox="0 0 7 7"><g fill="none" stroke="#9a9da4" stroke-width=".7"><rect x=".4" y=".8" width="6.2" height="5.8"/><path d="M.4 2.2 H6.6 M2.3 4.3 H4.7 M3.5 3.3 V5.3"/></g></svg>
<svg class="a" style="left:946px;top:446.1px" width="7" height="7" viewBox="0 0 7 7"><g fill="none" stroke="#9a9da4" stroke-width=".7"><path d="M4.5 1.3 H.6 V6.4 H5.7 V3.2"/><path d="M2.6 4.4 L6.4 .6"/></g></svg>
<svg class="a" style="left:963.5px;top:445.9px" width="8" height="8" viewBox="0 0 8 8"><g fill="none" stroke="#7d8087" stroke-width=".8"><circle cx="4" cy="4" r="3.4"/><path d="M1.6 6.4 L6.4 1.6"/></g></svg>
<svg class="a" style="left:984.5px;top:449.3px" width="7" height="1.4" viewBox="0 0 7 1.4"><g fill="#8a8d94"><circle cx=".7" cy=".7" r=".6"/><circle cx="3.5" cy=".7" r=".6"/><circle cx="6.3" cy=".7" r=".6"/></g></svg>
<div class="a" style="left:119px;top:473.6px;width:8.5px;height:8.5px;border:1px solid #dcdee2;border-radius:.5px;background:rgba(255,255,255,.99)"></div>
<div class="a" style="left:134.0px;top:473.60px;width:53.0px;height:10px;line-height:10px;text-align:center;white-space:nowrap;">博诚云礼服</div>
<div class="a" style="left:187.0px;top:460.80px;width:84.0px;height:10px;line-height:10px;text-align:center;white-space:nowrap;color:#3a8ee6;">Z24101201</div>
<div class="a" style="left:187.0px;top:472.30px;width:84.0px;height:10px;line-height:10px;text-align:center;white-space:nowrap;">自助下单/-</div>
<div class="a" style="left:217px;top:484.5px;width:22px;height:10.9px;background:rgba(247,160,33,.99);border-radius:1px;color:#fff;font-size:6.4px;line-height:10.9px;text-align:center;letter-spacing:0">待审</div>
<div class="a" style="left:271.0px;top:473.60px;width:95.0px;height:10px;line-height:10px;text-align:center;white-space:nowrap;">微信用户<span style="color:#3a8ee6">18050043480</span></div>
<div class="a" style="left:366.0px;top:467.40px;width:47.0px;height:10px;line-height:10px;text-align:center;white-space:nowrap;color:#e6553a;">爱尚礼服</div>
<div class="a" style="left:366.0px;top:479.40px;width:47.0px;height:10px;line-height:10px;text-align:center;white-space:nowrap;color:#e6553a;">小程序</div>
<div class="a" style="left:413.0px;top:467.40px;width:42.0px;height:10px;line-height:10px;text-align:center;white-space:nowrap;">12000</div>
<div class="a" style="left:413.0px;top:479.40px;width:42.0px;height:10px;line-height:10px;text-align:center;white-space:nowrap;color:#e6553a;">12000</div>
<div class="a" style="left:455.0px;top:473.60px;width:42.0px;height:10px;line-height:10px;text-align:center;white-space:nowrap;">0</div>
<div class="a" style="left:645.0px;top:473.60px;width:72.0px;height:10px;line-height:10px;text-align:center;white-space:nowrap;">2024-10-12 14:16</div>
<div class="a" style="left:923.2px;top:464.7px;width:22.8px;height:12.4px;background:rgba(45,140,240,.99);border-radius:2px;color:#fff;line-height:12.4px;text-align:center;-webkit-text-stroke:.12px">打印</div>
<div class="a" style="left:923.2px;top:479.7px;width:52px;height:13.2px;border:1px solid #e4e6ea;border-radius:2px;background:rgba(255,255,255,.99)"></div>
<div class="a" style="left:940px;top:479.7px;width:1px;height:13.2px;background:rgba(228,230,234,.99)"></div>
<div class="a" style="left:958px;top:479.7px;width:1px;height:13.2px;background:rgba(228,230,234,.99)"></div>
<div class="a" style="left:980.3px;top:479.7px;width:15.4px;height:13.2px;border:1px solid #e4e6ea;border-radius:2px;background:rgba(255,255,255,.99)"></div>
<svg class="a" style="left:928.5px;top:482.9px" width="7" height="7" viewBox="0 0 7 7"><g fill="none" stroke="#9a9da4" stroke-width=".7"><rect x=".4" y=".8" width="6.2" height="5.8"/><path d="M.4 2.2 H6.6 M2.3 4.3 H4.7 M3.5 3.3 V5.3"/></g></svg>
<svg class="a" style="left:946px;top:482.5px" width="7" height="7" viewBox="0 0 7 7"><g fill="none" stroke="#9a9da4" stroke-width=".7"><path d="M4.5 1.3 H.6 V6.4 H5.7 V3.2"/><path d="M2.6 4.4 L6.4 .6"/></g></svg>
<svg class="a" style="left:963.5px;top:482.3px" width="8" height="8" viewBox="0 0 8 8"><g fill="none" stroke="#7d8087" stroke-width=".8"><circle cx="4" cy="4" r="3.4"/><path d="M2.3 4 L3.5 5.2 L5.8 2.8"/></g></svg>
<svg class="a" style="left:984.5px;top:485.7px" width="7" height="1.4" viewBox="0 0 7 1.4"><g fill="#8a8d94"><circle cx=".7" cy=".7" r=".6"/><circle cx="3.5" cy=".7" r=".6"/><circle cx="6.3" cy=".7" r=".6"/></g></svg>
<!-- annotations -->
<div class="a" style="left:2px;top:79.5px;width:28.3px;height:40.5px;border:2.4px solid #e02b20;border-radius:2px"></div>
<div class="a" style="left:32.5px;top:60px;width:65.5px;height:23.5px;border:2.4px solid #e02b20;border-radius:2px"></div>
<div class="a" style="left:196.7px;top:161px;width:67.5px;height:22.8px;border:2.4px solid #e02b20;border-radius:2px"></div>
<svg class="a" style="left:0;top:0" width="1080" height="495" viewBox="0 0 1080 495"><path d="M36.62 103.63 L54.49 93.04 L55.86 95.13 L60.90 87.30 L51.71 88.77 L53.07 90.86 L36.18 102.97Z" fill="#e3261f"/><path d="M106.54 93.53 L185.14 163.50 L183.63 165.22 L192.90 168.30 L188.64 159.51 L187.12 161.24 L107.46 92.47Z" fill="#e3261f"/></svg>
</div></body></html>
